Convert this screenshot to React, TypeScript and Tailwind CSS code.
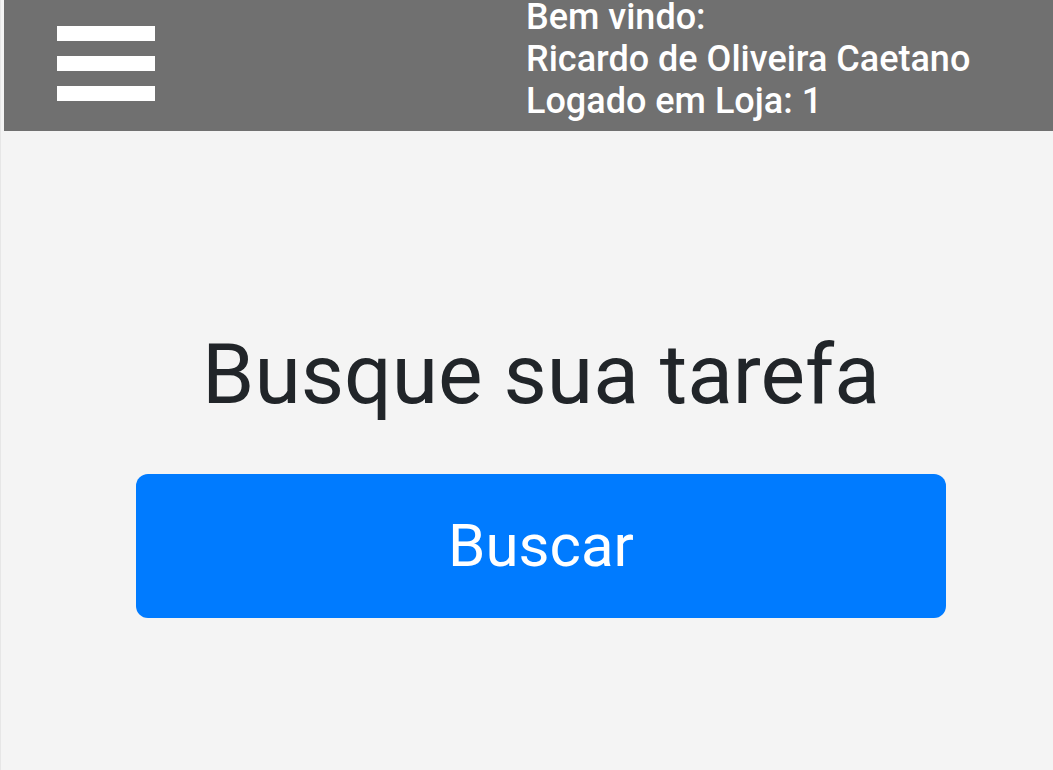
export default function App() {
  return (
    <div
      className="min-h-[770px] w-full bg-[#f4f4f4] border-l border-[#e6e6e6]"
      style={{ fontFamily: "Roboto, 'Noto Sans', sans-serif" }}
    >
      <header className="ml-[3px] flex h-[131px] bg-[#707070] text-white">
        <div className="ml-[53px] mt-[26px] flex w-[98px] flex-col gap-[15px]">
          <span className="h-[15px] bg-white" />
          <span className="h-[15px] bg-white" />
          <span className="h-[15px] bg-white" />
        </div>
        <div className="ml-[371px] flex flex-col gap-[8px] text-[36px] font-medium leading-[34px]">
          <div>Bem vindo:</div>
          <div>Ricardo de Oliveira Caetano</div>
          <div>Logado em Loja: 1</div>
        </div>
      </header>

      <main className="flex flex-col pt-[194px]">
        <h1 className="ml-[135px] w-[810px] text-center text-[84px] font-normal leading-[100px] text-[#212529]">
          Busque sua tarefa
        </h1>
        <button className="ml-[135px] mt-[49px] flex h-[144px] w-[810px] items-center justify-center rounded-[12px] bg-[#007bff] text-[60px] text-white">
          Buscar
        </button>
      </main>
    </div>
  );
}
